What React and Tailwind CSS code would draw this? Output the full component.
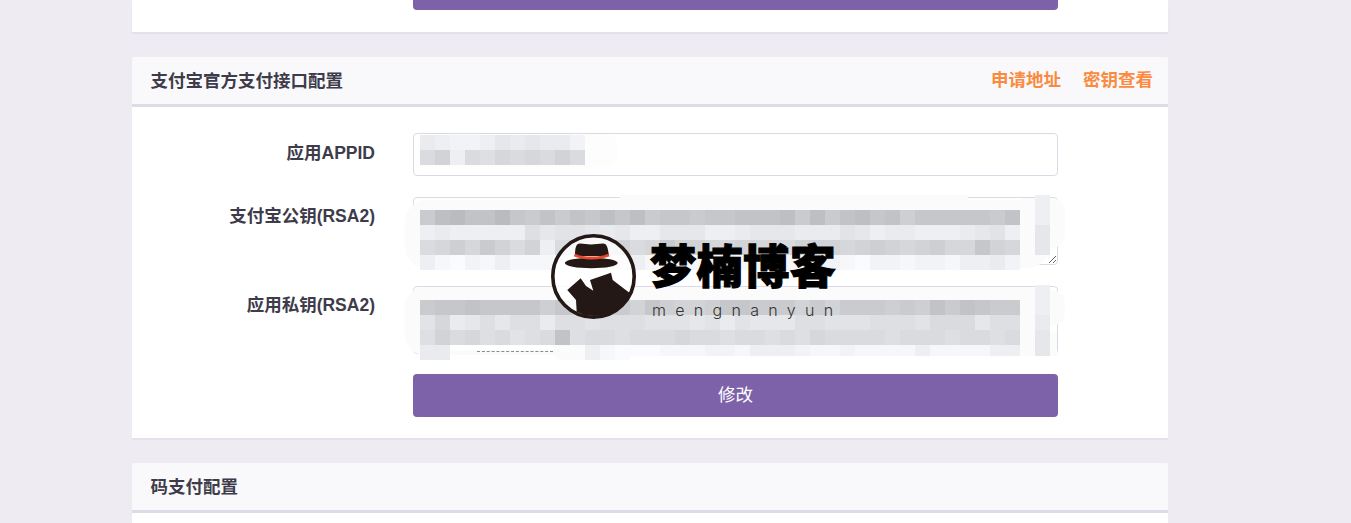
// 支付配置页 - 打码区和水印盖在表单上面
const inputRows = ["ghiihfgfggi", "cahcdbcbcac"];

// 每个字符是一格灰度，x 表示透明，side 是右边隔一格的那一列
const publicRows = [
  "",
  "8546647868675758778776665858657697777786",
  "hghhhhhdfeefgfhhfffhhgfffgggefhgghhhgfeh",
  "cb9b8acahcbcbacb8aabbabbcaaaba9aba9bb7ab",
  "hjkijhjjjkijiihjiijihjiijjhijkiijiijhhgi",
];
const publicSide = "hhffx";
const privateRows = [
  "",
  "87767777979888a79aa977888a8a888989686788",
  "ebgfdfddgddedddeeefegefffddeeedddecccfdd",
  "dacbdcedc6dccdcccbccdccdcdbccccdcccdccdc",
  "ggxxxxxxxxxhjkkkjjjiijhhhijjijjjjhjjjjhh",
];
const privateSide = "hhgff";

function Mosaic({ rows, side = "", className }) {
  return (
    <div className={"absolute flex flex-col " + className}>
      {rows.map((row, i) => (
        <div key={i} className="flex h-[15px]">
          {(side ? row.padEnd(41, "x") + side[i] : row).split("").map((c, j) => (
            <div
              key={j}
              className="w-[15px] h-[15px] shrink-0"
              style={c === "x" ? undefined : { backgroundColor: `rgb(${170 + 4 * parseInt(c, 36)} ${171 + 4 * parseInt(c, 36)} ${174 + 4 * parseInt(c, 36)})` }}
            />
          ))}
        </div>
      ))}
    </div>
  );
}

function CardHeader({ title, children }) {
  return (
    <div className="h-[50px] flex items-center justify-between pl-[18.5px] pr-[15px] pt-[1px] bg-[#f9f9fb] border-b-[3px] border-[#dedbe8] rounded-t-[3px]">
      <h3 className="text-[17.5px] font-bold text-[#3e3b4a]">{title}</h3>
      {children}
    </div>
  );
}

function Field({ label, top = "pt-[8px]", children }) {
  return (
    <div className="flex">
      <label className={"w-[243px] text-right text-[17.5px] leading-[24px] font-bold text-[#3e3b4a] " + top}>{label}</label>
      <div className="ml-[38px] w-[645px]">{children}</div>
    </div>
  );
}

function Logo() {
  return (
    <svg className="w-[86px] h-[86px]" viewBox="0 0 86 86">
      <circle cx="42.5" cy="42.5" r="40.7" fill="#ffffff" fillOpacity="0.82" stroke="#231815" strokeWidth="3.6" />
      <path d="M24 22 C24 14 25 9.5 29 9.5 C33 9.5 36 10.5 40 10.5 C44 10.5 48 9.5 52 9.5 C56 9.5 57 14 58 22 Z" fill="#231815" />
      <ellipse cx="40.3" cy="29" rx="26.4" ry="5.2" fill="#231815" />
      <path d="M23.3 21 C32 25 49 25 58 21" fill="none" stroke="#e8492b" strokeWidth="2.8" />
      <path d="M16.3 56 L29.7 44.3 L35 52 L42.3 56.7 L39 46 L60 38.7 L61.7 46 L79 59.3 A40 40 0 0 1 25.7 78 L25 66 Z" fill="#231815" />
    </svg>
  );
}

export default function App() {
  return (
    <div className="h-[523px] overflow-hidden bg-[#eeebf3] pl-[132px] font-['Liberation_Sans','Noto_Sans_CJK_SC',sans-serif]">
      <div className="w-[1036px] flex flex-col gap-[25px]">
        {/* 上一张卡片的底部 */}
        <div className="h-[32px] bg-white shadow-[0_2px_1px_#e4e1ea]">
          <div className="ml-[281px] w-[645px] h-[10px] bg-[#7e62a9] rounded-b-[4px]"></div>
        </div>

        <div className="bg-white rounded-t-[3px] shadow-[0_2px_1px_#e4e1ea]">
          <CardHeader title="支付宝官方支付接口配置">
            <div className="flex gap-[22px] -mt-[2px] text-[17.5px] font-bold text-[#fb8a3f]">
              <a href="#">申请地址</a>
              <a href="#">密钥查看</a>
            </div>
          </CardHeader>

          <div className="relative pt-[26px] pb-[21px] flex flex-col gap-[21px]">
            <Field label="应用APPID">
              <input className="block w-full h-[43px] bg-white border border-[#dcd9e6] rounded-[4px]" />
            </Field>
            <Field label="支付宝公钥(RSA2)" top="pt-[7px]">
              <textarea className="block w-full h-[68px] bg-white border border-[#dcd9e6] rounded-[4px]"></textarea>
            </Field>
            <Field label="应用私钥(RSA2)" top="pt-[7px]">
              <textarea className="block w-full h-[68px] bg-white border border-[#dcd9e6] rounded-[4px]"></textarea>
            </Field>
            <div className="ml-[281px] w-[645px] -mt-[1px]">
              <button className="w-full h-[43px] bg-[#7e62a9] rounded-[4px] text-[17.5px] text-white">修改</button>
            </div>

            {/* 打码 */}
            <div className="absolute left-[286px] top-[27px] w-[200px] h-[33px] bg-[#fdfdfd] rounded-[12px]"></div>
            <div className="absolute left-[273px] top-[93px] w-[645px] h-[68px] bg-[#fbfbfb] rounded-[22px]"></div>
            <div className="absolute left-[488px] top-[88px] w-[348px] h-[20px] bg-[#fbfbfb]"></div>
            <div className="absolute left-[880px] top-[91px] w-[53px] h-[50px] bg-[#fbfbfb] rounded-[14px]"></div>
            <div className="absolute left-[273px] top-[180px] w-[645px] h-[68px] bg-[#fbfbfb] rounded-[20px]"></div>
            <div className="absolute left-[880px] top-[183px] w-[53px] h-[36px] bg-[#fbfbfb] rounded-[14px]"></div>
            <div className="absolute left-[895px] top-[225px] w-[30px] h-[24px] bg-[#fbfbfb]"></div>
            <div className="absolute left-[420px] top-[225px] w-[140px] h-[28px] bg-[#fbfbfb] rounded-[12px]"></div>
            <div className="absolute left-[310px] top-[236px] w-[111px] h-[7px] bg-white"></div>
            <div className="absolute left-[345px] top-[244px] w-[76px] border-t border-dashed border-[#8a8a8a]"></div>
            <Mosaic rows={inputRows} className="left-[288px] top-[28px]" />
            <Mosaic rows={publicRows} side={publicSide} className="left-[288px] top-[88px]" />
            <Mosaic rows={privateRows} side={privateSide} className="left-[288px] top-[178px]" />
            <div className="absolute left-[498px] top-[249px] w-[430px] h-[4px] bg-white"></div>

            {/* 水印 */}
            <div className="absolute left-[419px] top-[127px]">
              <Logo />
            </div>
            <div className="absolute left-[518px] top-[129px] whitespace-nowrap text-[46px] leading-[62px] tracking-[0.6px] font-black text-black [-webkit-text-stroke:1.2px_black]">梦楠博客</div>
            <div className="absolute left-[520px] top-[193px] whitespace-nowrap text-[16px] leading-[20px] font-light tracking-[9.3px] text-[#333333] font-['Inter',sans-serif]">mengnanyun</div>
          </div>
        </div>

        <div className="bg-white rounded-t-[3px]">
          <CardHeader title="码支付配置" />
          <div className="h-[40px]"></div>
        </div>
      </div>
    </div>
  );
}
